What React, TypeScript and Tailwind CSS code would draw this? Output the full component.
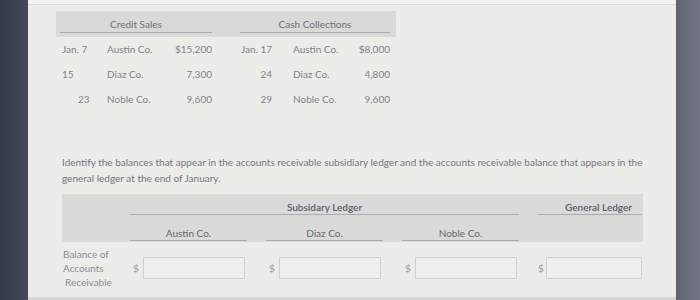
export default function App() {
  const font = { fontFamily: "Lato, 'Open Sans', sans-serif" };

  const sales = [
    { date: "Jan. 7", dateCls: "pl-[6px]", name: "Austin Co.", amount: "$15,200" },
    { date: "15", dateCls: "pl-[6px]", name: "Diaz Co.", amount: "7,300" },
    { date: "23", dateCls: "pl-[22px]", name: "Noble Co.", amount: "9,600" },
  ];
  const collections = [
    { date: "Jan. 17", name: "Austin Co.", amount: "$8,000" },
    { date: "24", name: "Diaz Co.", amount: "4,800" },
    { date: "29", name: "Noble Co.", amount: "9,600" },
  ];

  return (
    <div className="flex w-[700px] h-[300px] overflow-hidden bg-[#ecece9]" style={font}>
      <div className="w-[28px] h-full bg-gradient-to-r from-[#333946] to-[#444a58]" />

      <div className="flex-1 flex flex-col bg-[#ecece9]">
        <div className="h-[5px] bg-[#f2f2f0] border-b border-[#dcdcda]" />

        <div className="flex-1 flex flex-col pl-[28px] pt-[6px]">
          {/* transactions table */}
          <div className="w-[340px] text-[10px] text-[#80828a]">
            <div className="flex bg-[#d9d9d7] h-[26px] pt-[7px] pl-[4px]">
              <div className="w-[152px] text-center leading-[13px] pb-[1px] h-[15px] border-b border-[#a9abb2] text-[#6e717b]">
                Credit Sales
              </div>
              <div className="ml-[28px] w-[150px] text-center leading-[13px] pb-[1px] h-[15px] border-b border-[#a9abb2] text-[#6e717b]">
                Cash Collections
              </div>
            </div>

            {sales.map((s, i) => (
              <div key={s.name} className="grid grid-cols-[51px_58px_47px_60px_78px_40px_6px] h-[25px] items-center">
                <div className={s.dateCls}>{s.date}</div>
                <div>{s.name}</div>
                <div className="text-right">{s.amount}</div>
                <div className="text-right">{collections[i].date}</div>
                <div className="pl-[21px]">{collections[i].name}</div>
                <div className="text-right">{collections[i].amount}</div>
                <div />
              </div>
            ))}
          </div>

          <p className="mt-[42px] ml-[6px] text-[10px] leading-[16px] text-[#74767e] whitespace-nowrap">
            Identify the balances that appear in the accounts receivable subsidiary ledger and the accounts receivable balance that appears in the
            <br />
            general ledger at the end of January.
          </p>

          {/* answer table */}
          <div className="ml-[6px] mt-[8px] w-[581px] text-[10px]">
            <div className="bg-[#dadad8] h-[48px] grid grid-cols-[49px_117px_117px_117px_104px] gap-x-[19px] pt-[7px]">
              <div />
              <div className="col-span-3 leading-[13px] text-center font-semibold text-[#5a5e68] border-b border-[#a9abb2] pb-[1px] h-[14px]">
                Subsidary Ledger
              </div>
              <div className="leading-[13px] text-right pr-[10px] font-semibold text-[#5a5e68] border-b border-[#a9abb2] pb-[1px] h-[14px]">
                General Ledger
              </div>

              <div className="mt-[10px]" />
              {["Austin Co.", "Diaz Co.", "Noble Co."].map((n) => (
                <div key={n} className="mt-[10px] leading-[13px] text-center text-[#656872] border-b border-[#a9abb2] pb-[1px] h-[14px]">
                  {n}
                </div>
              ))}
              <div />
            </div>

            <div className="grid grid-cols-[49px_117px_117px_117px_104px] gap-x-[19px] items-center pt-[5px]">
              <div className="text-[#8a8c94] leading-[14px] pl-[1px] whitespace-nowrap">
                Balance of
                <br />
                Accounts
                <br />
                <span className="pl-[2px]">Receivable</span>
              </div>
              {[0, 1, 2].map((k) => (
                <div key={k} className="flex items-center">
                  <span className="w-[13px] pl-[3px] text-[#9a9ca2]">$</span>
                  <div className="w-[102px] h-[22px] border border-[#cfd0d2] bg-[#efefed]" />
                </div>
              ))}
              <div className="flex items-center">
                <span className="w-[8px] text-[#9a9ca2]">$</span>
                <div className="flex-1 h-[22px] border border-[#cfd0d2] bg-[#efefed]" />
              </div>
            </div>
          </div>
        </div>

        <div className="h-[3px] bg-[#d6d6d4]" />
      </div>

      <div className="w-[24px] h-full bg-gradient-to-r from-[#5f6370] to-[#737783]" />
    </div>
  );
}
